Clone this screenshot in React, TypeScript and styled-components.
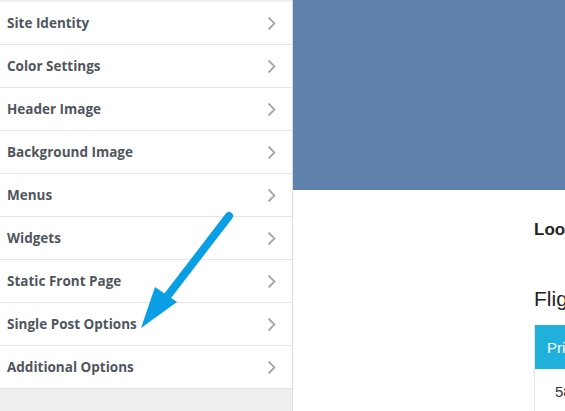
import React from "react";
import styled, { createGlobalStyle } from "styled-components";

const Global = createGlobalStyle`
  html, body { margin: 0; padding: 0; background: #fff; }
  body { width: 565px; height: 411px; overflow: hidden; }
`;

const Page = styled.div`
  position: relative;
  display: flex;
  width: 565px;
  height: 411px;
  overflow: hidden;
`;

const Sidebar = styled.aside`
  width: 292px;
  flex: none;
  display: flex;
  flex-direction: column;
  background: #eeeeee;
  border-right: 1px solid #dddddd;
  padding-top: 2px;
  box-sizing: content-box;
`;

const List = styled.ul`
  list-style: none;
  margin: 0;
  padding: 0;
  background: #fff;
`;

const Row = styled.li`
  height: 42px;
  border-bottom: 1px solid #e5e5e5;
  display: flex;
  align-items: center;
  justify-content: space-between;
  padding: 0 16px 0 7px;
  font-family: "Open Sans", "Noto Sans", sans-serif;
  font-weight: 700;
  font-size: 13.5px;
  color: #4f565d;
`;

const Main = styled.main`
  flex: 1;
  display: flex;
  flex-direction: column;
  overflow: hidden;
  font-family: "Liberation Sans", Arial, sans-serif;
  color: #222;
`;

const Hero = styled.div`
  height: 190px;
  flex: none;
  background: #5e82ab;
`;

const Content = styled.div`
  padding-left: 241px;
  white-space: nowrap;
`;

const Lead = styled.div`
  font-weight: 700;
  font-size: 17px;
  margin-top: 30px;
  line-height: 20px;
`;

const Heading = styled.div`
  font-size: 21px;
  margin-top: 47px;
  line-height: 24px;
`;

const Table = styled.div`
  margin-top: 14px;
  border-left: 1px solid #e5e5e5;
  width: 300px;
`;

const HeadCell = styled.div`
  height: 44px;
  background: #1fb0dc;
  color: #fff;
  font-size: 15px;
  display: flex;
  align-items: center;
  padding-left: 12px;
`;

const BodyCell = styled.div`
  height: 44px;
  color: #333;
  font-size: 15px;
  display: flex;
  align-items: center;
  padding-left: 20px;
`;

const Overlay = styled.svg`
  position: absolute;
  left: 0;
  top: 0;
  pointer-events: none;
`;

const Chevron = () => (
  <svg width="9" height="15" viewBox="0 0 9 15">
    <polyline points="1.5,1.5 7.5,7.5 1.5,13.5" fill="none" stroke="#a3a8ad" strokeWidth="1.8" />
  </svg>
);

const items = [
  "Site Identity",
  "Color Settings",
  "Header Image",
  "Background Image",
  "Menus",
  "Widgets",
  "Static Front Page",
  "Single Post Options",
  "Additional Options",
];

export default function App() {
  return (
    <>
      <Global />
      <Page>
        <Sidebar>
          <List>
            {items.map((t) => (
              <Row key={t}>
                <span>{t}</span>
                <Chevron />
              </Row>
            ))}
          </List>
        </Sidebar>
        <Main>
          <Hero />
          <Content>
            <Lead>Looking for cheap flights</Lead>
            <Heading>Flights</Heading>
            <Table>
              <HeadCell>Price</HeadCell>
              <BodyCell>58</BodyCell>
            </Table>
          </Content>
        </Main>
        <Overlay width="565" height="411" viewBox="0 0 565 411">
          <line x1="229" y1="216" x2="166" y2="298" stroke="#0a9fe4" strokeWidth="8" strokeLinecap="round" />
          <polygon points="141,328 155,287 177,302" fill="#0a9fe4" />
        </Overlay>
      </Page>
    </>
  );
}
